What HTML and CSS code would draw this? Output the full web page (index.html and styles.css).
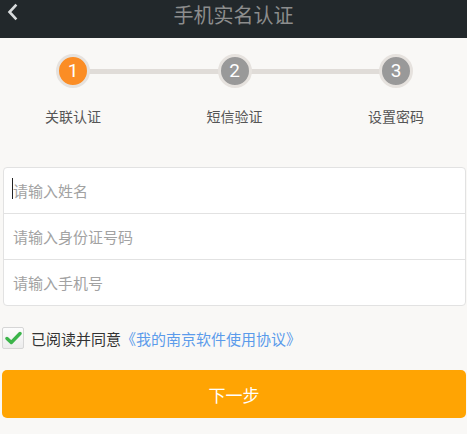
FILE: index.html
```html
<!DOCTYPE html>
<html lang="zh-CN">
<head>
<meta charset="utf-8">
<title>手机实名认证</title>
<link rel="stylesheet" href="styles.css">
</head>
<body>
<header class="topbar">
  <svg class="back" width="12" height="18" viewBox="0 0 12 18"><path d="M9.5 2.5 L3.5 9 L9.5 15.5" fill="none" stroke="#d9dcdd" stroke-width="2.6" stroke-linecap="square"/></svg>
  <h1 class="title">手机实名认证</h1>
</header>

<section class="steps">
  <div class="cell"><span class="dot active">1</span></div>
  <div class="bar"></div>
  <div class="cell"><span class="dot">2</span></div>
  <div class="bar"></div>
  <div class="cell"><span class="dot">3</span></div>
  <div class="label">关联认证</div>
  <div></div>
  <div class="label">短信验证</div>
  <div></div>
  <div class="label">设置密码</div>
</section>

<section class="card">
  <div class="row"><span class="caret"></span><span class="ph">请输入姓名</span></div>
  <div class="row"><span class="ph">请输入身份证号码</span></div>
  <div class="row"><span class="ph">请输入手机号</span></div>
</section>

<div class="agree">
  <span class="box"><svg width="17" height="14" viewBox="0 0 17 14"><path d="M2 7.5 L6.3 11.5 L15 2.5" fill="none" stroke="#3bb44a" stroke-width="3.4" stroke-linecap="round" stroke-linejoin="round"/></svg></span>
  <span class="agree-text">已阅读并同意</span><span class="link">《我的南京软件使用协议》</span>
</div>

<button class="next">下一步</button>
</body>
</html>
```
FILE: styles.css
```css
html, body {
  margin: 0;
  padding: 0;
}
body {
  width: 467px;
  height: 434px;
  overflow: hidden;
  background: #f9f8f6;
  font-family: "Noto Sans CJK SC", "Roboto", sans-serif;
}
.topbar {
  height: 38px;
  background: #22282b;
  display: flex;
  justify-content: center;
  position: relative;
}
.back {
  position: absolute;
  left: 6px;
  top: 3px;
}
.title {
  margin: 0;
  font-size: 20px;
  font-weight: normal;
  line-height: 30px;
  color: #8c8d8d;
  letter-spacing: 0;
}
.steps {
  display: grid;
  grid-template-columns: 56px 1fr 56px 1fr 56px;
  padding: 16px 43px 0 45px;
  row-gap: 18px;
}
.cell {
  display: flex;
  justify-content: center;
  align-items: center;
  position: relative;
  z-index: 1;
}
.dot {
  width: 28px;
  height: 28px;
  border-radius: 50%;
  background: #999999;
  border: 3.5px solid #e6e2de;
  color: #fff;
  font-family: "Roboto", sans-serif;
  font-size: 19px;
  line-height: 28px;
  text-align: center;
}
.dot.active {
  background: #fb8d25;
}
.bar {
  align-self: center;
  height: 5px;
  background: #e0dcd8;
  margin: 0 -12px;
}
.label {
  text-align: center;
  font-size: 14px;
  line-height: 20px;
  color: #555;
  white-space: nowrap;
}
.card {
  margin: 41px 1px 0 3px;
  background: #fff;
  border: 1px solid #e2e2e2;
  border-radius: 4px;
}
.row {
  height: 45px;
  display: flex;
  align-items: center;
  padding-left: 9px;
  border-bottom: 1px solid #e2e2e2;
  position: relative;
}
.row:last-child {
  border-bottom: 0;
}
.ph {
  font-size: 15px;
  color: #a2a2a2;
}
.caret {
  position: absolute;
  left: 8px;
  top: 10px;
  width: 1px;
  height: 21px;
  background: #222;
}
.agree {
  display: flex;
  align-items: center;
  margin: 21px 0 0 2px;
  height: 22px;
}
.box {
  width: 20px;
  height: 20px;
  border: 1px solid #d6d6d6;
  border-radius: 2px;
  background: linear-gradient(#fdfdfd, #ececec);
  display: flex;
  align-items: center;
  justify-content: center;
  margin-right: 7px;
}
.agree-text {
  font-size: 15px;
  color: #333;
}
.link {
  font-size: 15px;
  color: #5b9beb;
}
.next {
  display: block;
  margin: 21px 1px 0 2px;
  width: 464px;
  height: 48px;
  border: 0;
  border-radius: 5px;
  background: #ffa403;
  color: #fff;
  font-family: "Noto Sans CJK SC", sans-serif;
  font-size: 17px;
  padding: 0;
}
```
